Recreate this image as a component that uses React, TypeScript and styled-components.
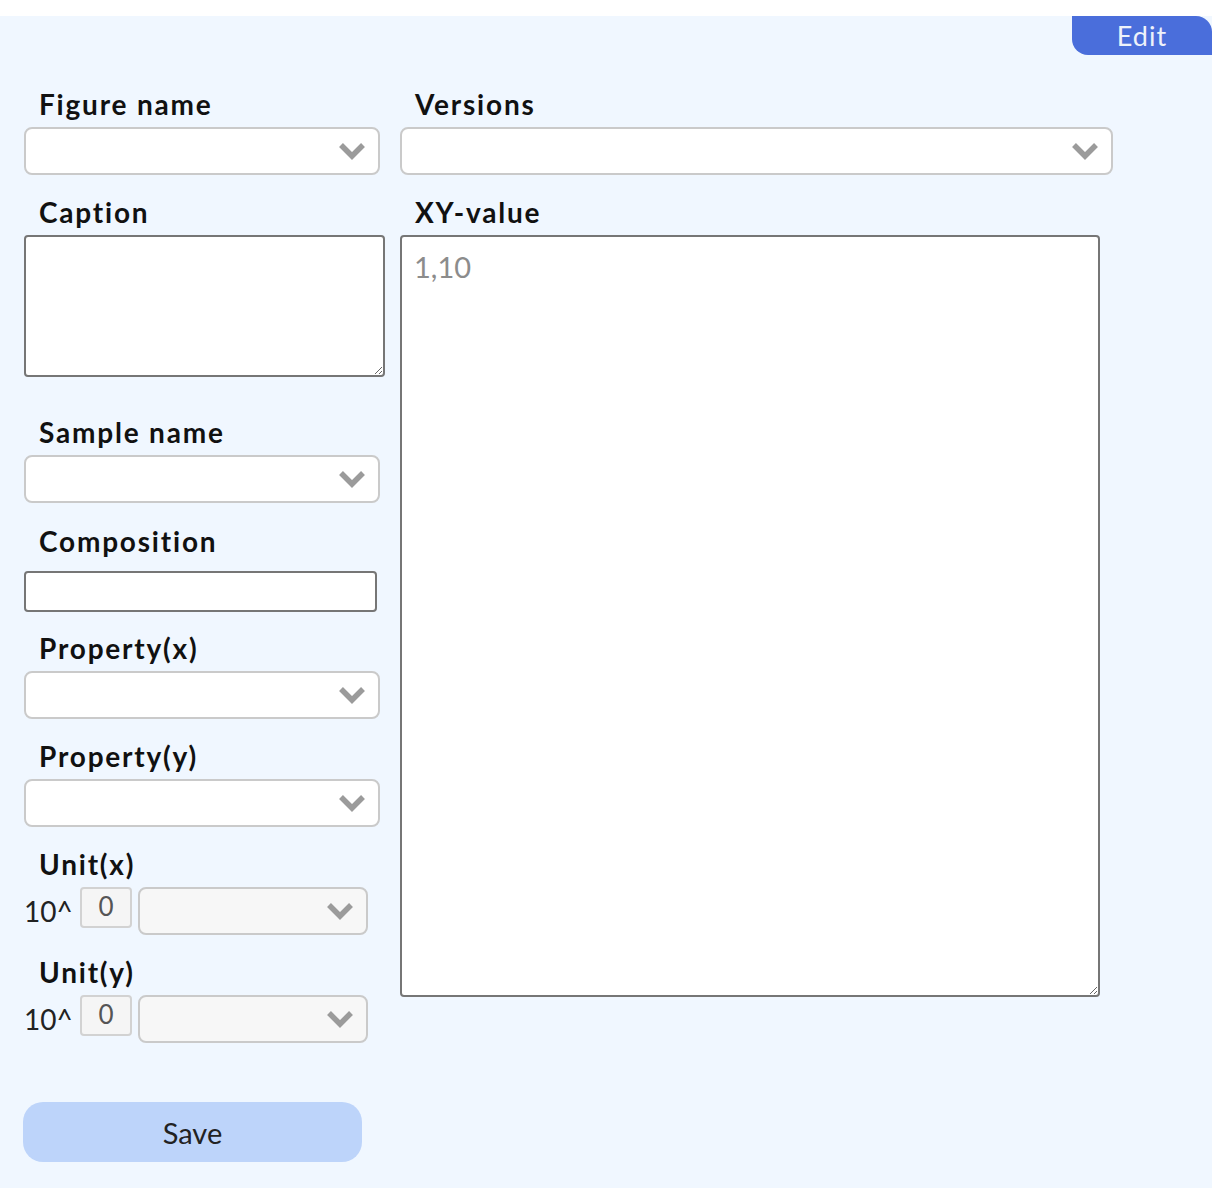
import * as React from 'react'
import styled, { createGlobalStyle } from 'styled-components'

const GlobalStyle = createGlobalStyle`
  body {
    margin: 0;
    font-family: Lato, "Noto Sans", sans-serif;
    background: #ffffff;
  }
`

const Panel = styled.div`
  margin: 16px 12px 0 0;
  min-height: 1172px;
  background: #f0f7ff;
  box-sizing: border-box;
`

const Header = styled.div`
  display: flex;
  justify-content: flex-end;
`

const EditButton = styled.button`
  width: 140px;
  height: 39px;
  border: none;
  border-radius: 0 16px 0 16px;
  background: #4a6edb;
  color: #eef2fa;
  font-family: Lato, sans-serif;
  font-size: 27px;
  letter-spacing: 1px;
  padding: 0;
  cursor: pointer;
`

const Form = styled.div`
  display: flex;
  gap: 14px;
  padding: 31px 24px 0 24px;
`

const Column = styled.div<{ $width: number }>`
  display: flex;
  flex-direction: column;
  width: ${p => p.$width}px;
`

const Group = styled.div<{ $top?: number }>`
  display: flex;
  flex-direction: column;
  margin-top: ${p => p.$top || 0}px;
`

const Label = styled.label`
  font-size: 28px;
  font-weight: 700;
  line-height: 36px;
  letter-spacing: 1.8px;
  padding-left: 15px;
  color: #111111;
`

const SelectBox = styled.div<{ $width: number; $muted?: boolean; $top?: number }>`
  box-sizing: border-box;
  width: ${p => p.$width}px;
  height: 48px;
  margin-top: ${p => (p.$top === undefined ? 5 : p.$top)}px;
  border: 2px solid #cacaca;
  border-radius: 8px;
  background: ${p => (p.$muted ? '#f7f7f7' : '#ffffff')};
  display: flex;
  align-items: center;
  justify-content: flex-end;
  padding-right: 12px;
`

const TextArea = styled.textarea<{ $width: number; $height: number }>`
  box-sizing: border-box;
  display: block;
  width: ${p => p.$width}px;
  height: ${p => p.$height}px;
  margin-top: 5px;
  border: 2px solid #767676;
  border-radius: 4px;
  background: #ffffff;
  padding: 12px 12px;
  font-family: Lato, sans-serif;
  font-size: 29px;
  line-height: 36px;
  color: #222;
  &::placeholder {
    color: #8c8c8c;
  }
`

const TextInput = styled.input`
  box-sizing: border-box;
  display: block;
  width: 353px;
  height: 41px;
  margin-top: 12px;
  border: 2px solid #767676;
  border-radius: 4px;
  background: #ffffff;
`

const UnitRow = styled.div`
  display: flex;
  align-items: flex-start;
  margin-top: 5px;
`

const Power = styled.span`
  font-size: 28px;
  line-height: 48px;
  color: #222;
  width: 56px;
`

const Exponent = styled.div`
  box-sizing: border-box;
  width: 52px;
  height: 41px;
  margin-right: 6px;
  border: 2px solid #d2d2d2;
  border-radius: 4px;
  background: #f5f5f5;
  color: #555;
  font-size: 26px;
  line-height: 35px;
  text-align: center;
`

const SaveButton = styled.button`
  width: 339px;
  height: 60px;
  margin-top: 59px;
  margin-left: -1px;
  border: none;
  border-radius: 20px;
  background: #bdd4fa;
  color: #222;
  font-family: Lato, sans-serif;
  font-size: 29px;
  cursor: pointer;
`

const Chevron = () => (
  <svg width="28" height="18" viewBox="0 0 28 18">
    <polyline points="3,3 14,14 25,3" fill="none" stroke="#9b9b9b" strokeWidth="5.5" strokeLinecap="butt" />
  </svg>
)

const Select = (props: { width: number; muted?: boolean; top?: number }) => (
  <SelectBox $width={props.width} $muted={props.muted} $top={props.top}>
    <Chevron />
  </SelectBox>
)

const Unit = (props: { label: string }) => (
  <Group $top={19}>
    <Label>{ props.label }</Label>
    <UnitRow>
      <Power>10^</Power>
      <Exponent>0</Exponent>
      <Select width={230} muted={true} top={0} />
    </UnitRow>
  </Group>
)

export default class App extends React.Component {
  public render() {
    return (
      <Panel>
        <GlobalStyle />
        <Header>
          <EditButton type="button">Edit</EditButton>
        </Header>
        <Form>
          <Column $width={362}>
            <Group>
              <Label>Figure name</Label>
              <Select width={356} />
            </Group>
            <Group $top={19}>
              <Label>Caption</Label>
              <TextArea $width={361} $height={142} />
            </Group>
            <Group $top={37}>
              <Label>Sample name</Label>
              <Select width={356} />
            </Group>
            <Group $top={20}>
              <Label>Composition</Label>
              <TextInput type="text" />
            </Group>
            <Group $top={18}>
              <Label>Property(x)</Label>
              <Select width={356} />
            </Group>
            <Group $top={19}>
              <Label>Property(y)</Label>
              <Select width={356} />
            </Group>
            <Unit label="Unit(x)" />
            <Unit label="Unit(y)" />
            <SaveButton type="button">Save</SaveButton>
          </Column>
          <Column $width={713}>
            <Group>
              <Label>Versions</Label>
              <Select width={713} />
            </Group>
            <Group $top={19}>
              <Label>XY-value</Label>
              <TextArea $width={700} $height={762} placeholder="1,10" />
            </Group>
          </Column>
        </Form>
      </Panel>
    )
  }
}
